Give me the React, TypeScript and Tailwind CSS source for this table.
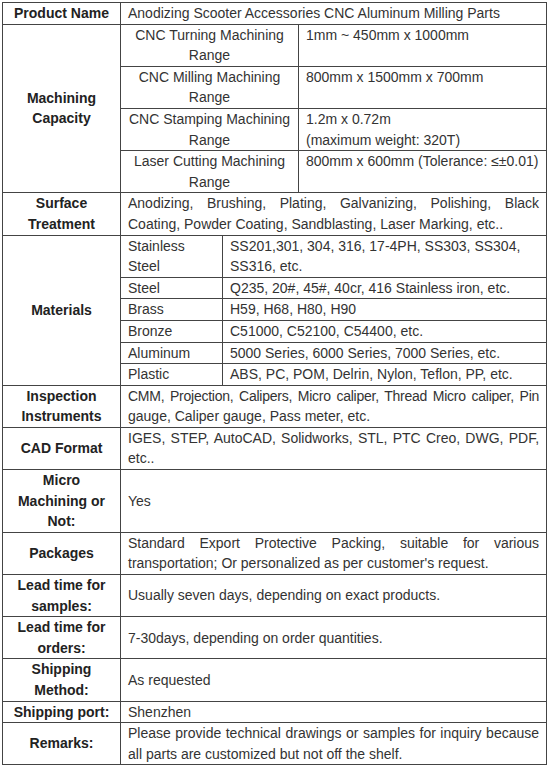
import React from "react";

const L = "border border-[#444] px-[5px] text-center align-middle font-bold text-[#222]";
const B = "border border-[#444] px-[7px] text-[#333]";
const VM = B + " text-left align-middle";
const VT = B + " text-left align-top";
const VC = B + " text-center align-middle";
const VJ = B + " text-justify align-middle";

export default function App() {
  return (
    <div className="bg-white w-[550px] h-[771px] pt-[2px] pl-[2px]">
      <table
        className="table-fixed border-collapse w-[544px] text-[14px] leading-[20.6px]"
        style={{ fontFamily: '"Liberation Sans", Arial, sans-serif' }}
      >
        <colgroup>
          <col className="w-[118px]" />
          <col className="w-[102px]" />
          <col className="w-[76px]" />
          <col className="w-[248px]" />
        </colgroup>
        <tbody>
          <tr>
            <td className={L}>Product Name</td>
            <td colSpan={3} className={VM}>
              Anodizing Scooter Accessories CNC Aluminum Milling Parts
            </td>
          </tr>
          <tr>
            <td rowSpan={4} className={L}>
              Machining
              <br />
              Capacity
            </td>
            <td colSpan={2} className={VC}>
              CNC Turning Machining
              <br />
              Range
            </td>
            <td className={VT}>1mm ~ 450mm x 1000mm</td>
          </tr>
          <tr>
            <td colSpan={2} className={VC}>
              CNC Milling Machining
              <br />
              Range
            </td>
            <td className={VT}>800mm x 1500mm x 700mm</td>
          </tr>
          <tr>
            <td colSpan={2} className={VC}>
              CNC Stamping Machining
              <br />
              Range
            </td>
            <td className={VT}>
              1.2m x 0.72m
              <br />
              (maximum weight: 320T)
            </td>
          </tr>
          <tr>
            <td colSpan={2} className={VC}>
              Laser Cutting Machining
              <br />
              Range
            </td>
            <td className={VT}>800mm x 600mm (Tolerance: ≤±0.01)</td>
          </tr>
          <tr>
            <td className={L}>
              Surface
              <br />
              Treatment
            </td>
            <td colSpan={3} className={VJ}>
              Anodizing, Brushing, Plating, Galvanizing, Polishing, Black Coating, Powder Coating,
              Sandblasting, Laser Marking, etc..
            </td>
          </tr>
          <tr>
            <td rowSpan={6} className={L}>
              Materials
            </td>
            <td className={VM}>
              Stainless
              <br />
              Steel
            </td>
            <td colSpan={2} className={VM}>
              SS201,301, 304, 316, 17-4PH, SS303, SS304, SS316, etc.
            </td>
          </tr>
          <tr>
            <td className={VM}>Steel</td>
            <td colSpan={2} className={VM}>
              Q235, 20#, 45#, 40cr, 416 Stainless iron, etc.
            </td>
          </tr>
          <tr>
            <td className={VM}>Brass</td>
            <td colSpan={2} className={VM}>
              H59, H68, H80, H90
            </td>
          </tr>
          <tr>
            <td className={VM}>Bronze</td>
            <td colSpan={2} className={VM}>
              C51000, C52100, C54400, etc.
            </td>
          </tr>
          <tr>
            <td className={VM}>Aluminum</td>
            <td colSpan={2} className={VM}>
              5000 Series, 6000 Series, 7000 Series, etc.
            </td>
          </tr>
          <tr>
            <td className={VM}>Plastic</td>
            <td colSpan={2} className={VM}>
              ABS, PC, POM, Delrin, Nylon, Teflon, PP, etc.
            </td>
          </tr>
          <tr>
            <td className={L}>
              Inspection
              <br />
              Instruments
            </td>
            <td colSpan={3} className={VM}>
              <div className="text-justify [text-align-last:justify] tracking-[-0.25px]">
                CMM, Projection, Calipers, Micro caliper, Thread Micro caliper, Pin
              </div>
              <div>gauge, Caliper gauge, Pass meter, etc.</div>
            </td>
          </tr>
          <tr>
            <td className={L}>CAD Format</td>
            <td colSpan={3} className={VJ}>
              IGES, STEP, AutoCAD, Solidworks, STL, PTC Creo, DWG, PDF, etc..
            </td>
          </tr>
          <tr>
            <td className={L}>
              Micro
              <br />
              Machining or
              <br />
              Not:
            </td>
            <td colSpan={3} className={VM}>
              Yes
            </td>
          </tr>
          <tr>
            <td className={L}>Packages</td>
            <td colSpan={3} className={VJ}>
              Standard Export Protective Packing, suitable for various transportation; Or
              personalized as per customer's request.
            </td>
          </tr>
          <tr>
            <td className={L}>
              Lead time for
              <br />
              samples:
            </td>
            <td colSpan={3} className={VM}>
              Usually seven days, depending on exact products.
            </td>
          </tr>
          <tr>
            <td className={L}>
              Lead time for
              <br />
              orders:
            </td>
            <td colSpan={3} className={VM}>
              7-30days, depending on order quantities.
            </td>
          </tr>
          <tr>
            <td className={L}>
              Shipping
              <br />
              Method:
            </td>
            <td colSpan={3} className={VM}>
              As requested
            </td>
          </tr>
          <tr>
            <td className={L}>Shipping port:</td>
            <td colSpan={3} className={VM}>
              Shenzhen
            </td>
          </tr>
          <tr>
            <td className={L}>Remarks:</td>
            <td colSpan={3} className={VJ}>
              Please provide technical drawings or samples for inquiry because all parts are
              customized but not off the shelf.
            </td>
          </tr>
        </tbody>
      </table>
    </div>
  );
}
